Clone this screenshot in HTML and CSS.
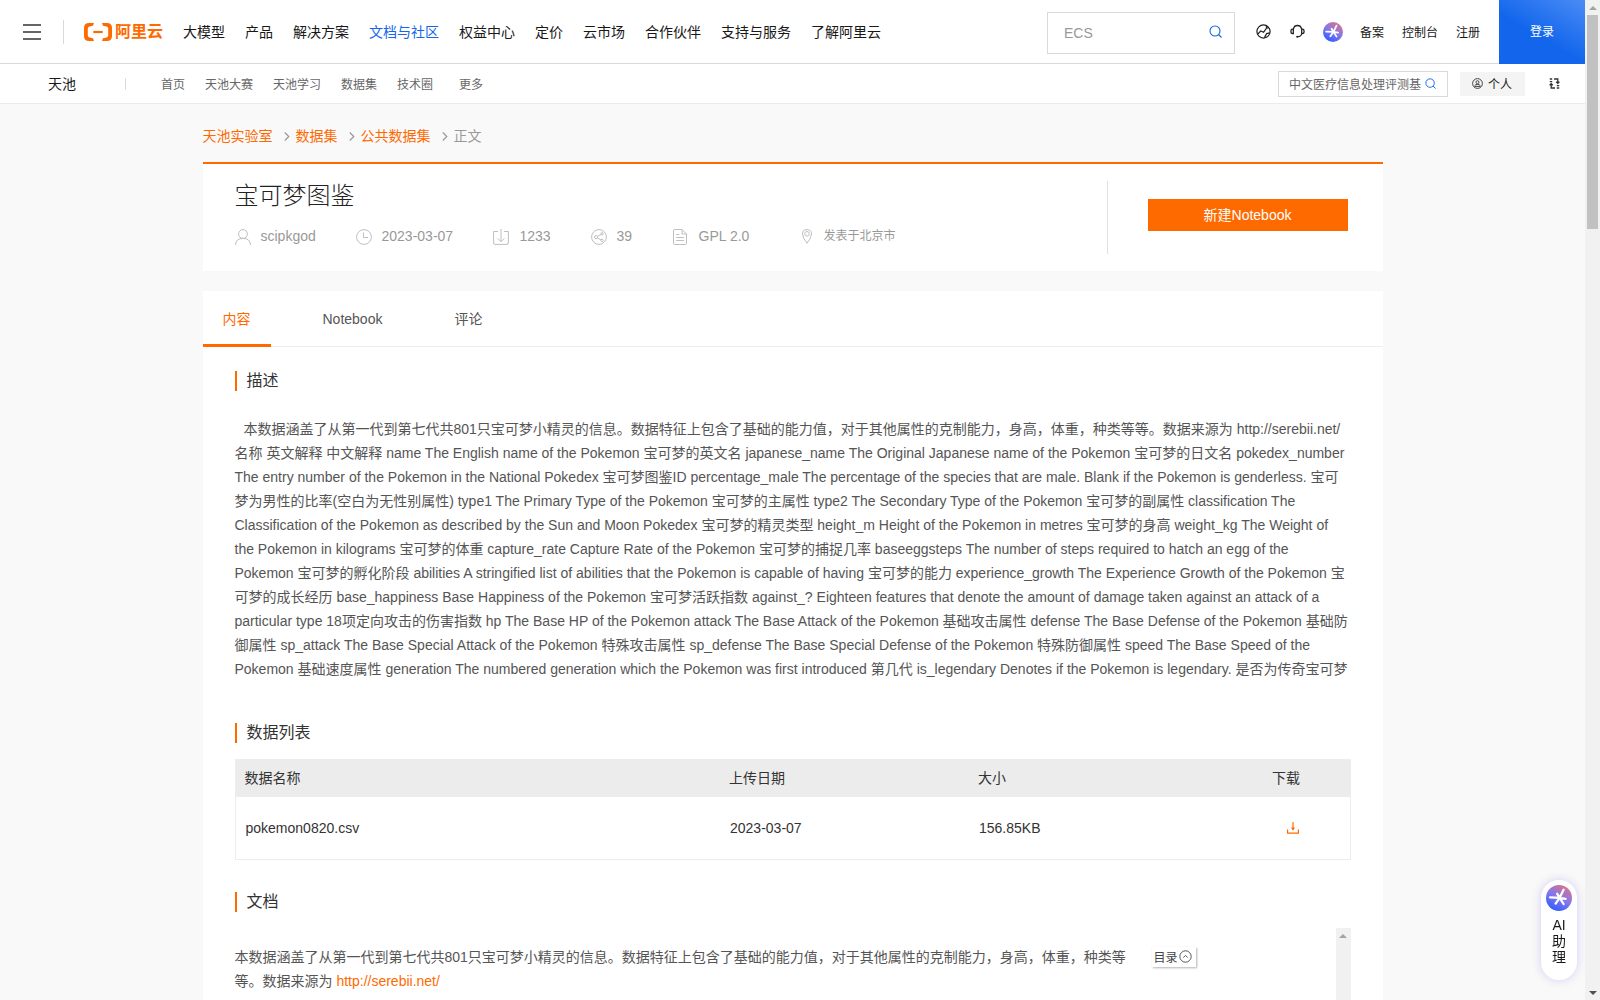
FILE: index.html
```html
<!DOCTYPE html>
<html lang="zh-CN">
<head>
  <meta charset="UTF-8">
  <meta name="viewport" content="width=device-width, initial-scale=1.0">
  <title>宝可梦图鉴_数据集-阿里云天池</title>
  <link rel="stylesheet" href="styles.css">
</head>
<body>
  <!-- 公共图形 -->
  <svg class="defs" width="0" height="0">
    <defs>
      <linearGradient id="aiGrad" x1="0.25" y1="1" x2="0.8" y2="0">
        <stop offset="0" stop-color="#2b5cff"/>
        <stop offset="0.5" stop-color="#8577ee"/>
        <stop offset="1" stop-color="#e0747e"/>
      </linearGradient>
      <symbol id="ai" viewBox="0 0 26 26">
        <circle cx="13" cy="13" r="13" fill="url(#aiGrad)"/>
        <path d="M17.6 4.8L13.6 12.8M4 12.4L13.6 12.8L19.6 13.8M13.6 12.8L9.6 18.6M13.6 12.8L17.6 19M13.6 12.8L11.2 8.8" fill="none" stroke="#fff" stroke-width="2.3" stroke-linecap="round"/>
      </symbol>
      <symbol id="search" viewBox="0 0 13 13">
        <circle cx="6" cy="6" r="5" fill="none" stroke="#1366ec" stroke-width="1.1"/>
        <path d="M9.5 9.5L12.5 12.5" stroke="#1366ec" stroke-width="1.1"/>
      </symbol>
    </defs>
  </svg>

  <div class="page">
    <!-- 顶部导航 -->
    <header class="header">
      <div class="burger"><i></i><i></i><i></i></div>
      <span class="header-line"></span>
      <a class="logo">
        <svg width="28" height="18" viewBox="0 0 28 18">
          <path d="M10 0H5Q0 0 0 5V13Q0 18 5 18H10L9 15.3L5.5 14.6Q3.8 14.2 3.8 12.5V5.5Q3.8 3.8 5.5 3.4L9 2.7Z" fill="#ff6a00"/>
          <path d="M18 0H23Q28 0 28 5V13Q28 18 23 18H18L19 15.3L22.5 14.6Q24.2 14.2 24.2 12.5V5.5Q24.2 3.8 22.5 3.4L19 2.7Z" fill="#ff6a00"/>
          <rect x="9.3" y="7.9" width="9.4" height="2.2" fill="#ff6a00"/>
        </svg>
        <span>阿里云</span>
      </a>
      <nav class="nav">
        <a>大模型</a>
        <a>产品</a>
        <a>解决方案</a>
        <a class="active">文档与社区</a>
        <a>权益中心</a>
        <a>定价</a>
        <a>云市场</a>
        <a>合作伙伴</a>
        <a>支持与服务</a>
        <a>了解阿里云</a>
      </nav>
      <div class="search-box">
        <span>ECS</span>
        <svg width="13" height="13"><use href="#search"/></svg>
      </div>
      <div class="tools">
        <svg width="15" height="15" viewBox="0 0 15 15" fill="none" stroke="#222" stroke-width="1.2">
          <circle cx="7.5" cy="7.5" r="6.6"/>
          <path d="M1.5 10.3L4.7 7L7.6 8.2L10.5 4.2L12.7 3.6M8.4 13.6L10.6 9.6L13.8 8.8M10.2 1.7L10.6 4"/>
        </svg>
        <svg width="15" height="15" viewBox="0 0 15 15" fill="none" stroke="#222" stroke-width="1.3">
          <path d="M3.3 5.2V9.5H2.2Q.9 9.3 .9 7.4Q.9 5.4 2.2 5.2H3.4C3.8 2.7 5.3 1.5 7.5 1.5S11.2 2.7 11.6 5.2H12.8Q14.1 5.4 14.1 7.4Q14.1 9.3 12.8 9.5H11.7V5.2M11.7 9.5Q11.3 12.6 7.6 12.8"/>
          <circle cx="7.2" cy="12.8" r="1" fill="#222" stroke="none"/>
        </svg>
        <svg width="20" height="20"><use href="#ai"/></svg>
      </div>
      <nav class="user-nav">
        <a>备案</a>
        <a>控制台</a>
        <a>注册</a>
      </nav>
      <a class="login">登录</a>
    </header>

    <!-- 二级导航 -->
    <div class="subnav">
      <span class="subnav-title">天池</span>
      <span class="subnav-line"></span>
      <nav class="subnav-menu">
        <a>首页</a>
        <a>天池大赛</a>
        <a>天池学习</a>
        <a>数据集</a>
        <a>技术圈</a>
        <a class="more">更多</a>
      </nav>
      <div class="sub-search">
        <span>中文医疗信息处理评测基</span>
        <svg width="11" height="11"><use href="#search"/></svg>
      </div>
      <a class="personal">
        <svg width="11" height="11" viewBox="0 0 11 11" fill="none" stroke="#444" stroke-width="1">
          <circle cx="5.5" cy="5.5" r="4.9"/>
          <circle cx="5.5" cy="4.2" r="1.5"/>
          <path d="M2.8 8.4V7.6Q3.3 6.4 5.5 6.4T8.2 7.6V8.4Z"/>
        </svg>
        个人
      </a>
      <svg class="switch" width="11" height="11" viewBox="0 0 11 11" fill="none" stroke="#333" stroke-width="1.3">
        <path d="M5 1H8.8V5M7.2 3.8L8.8 5.4L10.4 3.8M6 10H2.2V6M.6 7.2L2.2 5.6L3.8 7.2"/>
        <path d="M.8 1H3.2M.8 3.6H3.2M7.8 7.6H10.2M7.8 10H10.2"/>
      </svg>
    </div>

    <main class="main">
      <div class="breadcrumb">
        <a>天池实验室</a>
        <svg width="6" height="9" viewBox="0 0 6 9"><path d="M.8 .5L4.8 4.5L.8 8.5"/></svg>
        <a>数据集</a>
        <svg width="6" height="9" viewBox="0 0 6 9"><path d="M.8 .5L4.8 4.5L.8 8.5"/></svg>
        <a>公共数据集</a>
        <svg width="6" height="9" viewBox="0 0 6 9"><path d="M.8 .5L4.8 4.5L.8 8.5"/></svg>
        <span>正文</span>
      </div>

      <!-- 数据集信息 -->
      <section class="intro">
        <div class="intro-left">
          <h1>宝可梦图鉴</h1>
          <div class="meta">
            <span class="meta-item m-user">
              <svg width="16" height="16" viewBox="0 0 16 16"><circle cx="8" cy="5" r="4.4"/><path d="M.5 16Q.8 9.4 8 9.4T15.5 16"/></svg>
              scipkgod
            </span>
            <span class="meta-item m-date">
              <svg width="16" height="16" viewBox="0 0 16 16"><circle cx="8" cy="8" r="7.4"/><path d="M7.5 3.5V8.5H12"/></svg>
              2023-03-07
            </span>
            <span class="meta-item m-down">
              <svg width="16" height="16" viewBox="0 0 16 16"><path d="M5 2.5H.6V14Q.6 15.4 2 15.4H14Q15.4 15.4 15.4 14V2.5H11M8 0V12.6M4.6 9.4L8 12.8L11.4 9.4"/></svg>
              1233
            </span>
            <span class="meta-item m-share">
              <svg width="16" height="16" viewBox="0 0 16 16"><circle cx="8" cy="8" r="7.4"/><circle cx="5" cy="8.2" r="1.6"/><circle cx="11" cy="4.8" r="1.2"/><circle cx="11" cy="11.4" r="1.2"/><path d="M6.4 7.4L10 5.4M6.4 9L10 10.8"/></svg>
              39
            </span>
            <span class="meta-item m-lic">
              <svg width="14" height="16" viewBox="0 0 14 16"><path d="M9 .5H1.8Q.5 .5 .5 1.8V14.2Q.5 15.5 1.8 15.5H12.2Q13.5 15.5 13.5 14.2V5ZM9 .5V5H13.5M3.2 5.5H6M3.2 8.5H11M3.2 11.5H11"/></svg>
              GPL 2.0
            </span>
            <span class="meta-item m-loc">
              <svg width="10" height="15" viewBox="0 0 10 15"><path d="M5 14.2Q.5 8.6 .5 5Q.5 .6 5 .6T9.5 5Q9.5 8.6 5 14.2Z"/><circle cx="5" cy="4.8" r="2.3"/></svg>
              发表于北京市
            </span>
          </div>
        </div>
        <div class="intro-right">
          <button class="new-btn">新建Notebook</button>
        </div>
      </section>

      <section class="content">
        <!-- 标签页 -->
        <div class="tabs">
          <a class="tab active">内容</a>
          <a class="tab">Notebook</a>
          <a class="tab">评论</a>
        </div>

        <div class="panel">
          <h2>描述</h2>
          <p class="desc">
            <span class="indent">本数据涵盖了从第一代到第七代共801只宝可梦小精灵的信息。数据特征上包含了基础的能力值，对于其他属性的克制能力，身高，体重，种类等等。数据来源为 http://serebii.net/</span><br>
            名称 英文解释 中文解释 name The English name of the Pokemon 宝可梦的英文名 japanese_name The Original Japanese name of the Pokemon 宝可梦的日文名 pokedex_number<br>
            The entry number of the Pokemon in the National Pokedex 宝可梦图鉴ID percentage_male The percentage of the species that are male. Blank if the Pokemon is genderless. 宝可<br>
            梦为男性的比率(空白为无性别属性) type1 The Primary Type of the Pokemon 宝可梦的主属性 type2 The Secondary Type of the Pokemon 宝可梦的副属性 classification The<br>
            Classification of the Pokemon as described by the Sun and Moon Pokedex 宝可梦的精灵类型 height_m Height of the Pokemon in metres 宝可梦的身高 weight_kg The Weight of<br>
            the Pokemon in kilograms 宝可梦的体重 capture_rate Capture Rate of the Pokemon 宝可梦的捕捉几率 baseeggsteps The number of steps required to hatch an egg of the<br>
            Pokemon 宝可梦的孵化阶段 abilities A stringified list of abilities that the Pokemon is capable of having 宝可梦的能力 experience_growth The Experience Growth of the Pokemon 宝<br>
            可梦的成长经历 base_happiness Base Happiness of the Pokemon 宝可梦活跃指数 against_? Eighteen features that denote the amount of damage taken against an attack of a<br>
            particular type 18项定向攻击的伤害指数 hp The Base HP of the Pokemon attack The Base Attack of the Pokemon 基础攻击属性 defense The Base Defense of the Pokemon 基础防<br>
            御属性 sp_attack The Base Special Attack of the Pokemon 特殊攻击属性 sp_defense The Base Special Defense of the Pokemon 特殊防御属性 speed The Base Speed of the<br>
            Pokemon 基础速度属性 generation The numbered generation which the Pokemon was first introduced 第几代 is_legendary Denotes if the Pokemon is legendary. 是否为传奇宝可梦
          </p>

          <h2 class="list-title">数据列表</h2>
          <table class="data-table">
            <thead>
              <tr>
                <th class="c-name">数据名称</th>
                <th class="c-date">上传日期</th>
                <th class="c-size">大小</th>
                <th>下载</th>
              </tr>
            </thead>
            <tbody>
              <tr>
                <td>pokemon0820.csv</td>
                <td>2023-03-07</td>
                <td>156.85KB</td>
                <td class="c-down">
                  <svg width="12" height="12" viewBox="0 0 12 12" fill="none" stroke="#ff6a00" stroke-width="1.2"><path d="M.6 7.5V11.2H11.4V7.5M6 0V8"/><path d="M4 5.4H8L6 8.6Z" fill="#ff6a00" stroke="none"/></svg>
                </td>
              </tr>
            </tbody>
          </table>

          <h2 class="doc-title">文档</h2>
          <div class="doc">
            <p class="doc-text">
              本数据涵盖了从第一代到第七代共801只宝可梦小精灵的信息。数据特征上包含了基础的能力值，对于其他属性的克制能力，身高，体重，种类等<br>
              等。数据来源为 <a>http://serebii.net/</a>
            </p>
            <div class="toc">
              目录
              <svg width="13" height="13" viewBox="0 0 13 13" fill="none" stroke="#555"><circle cx="6.5" cy="6.5" r="5.7"/><path d="M4.3 7.6L6.5 5.4L8.7 7.6"/></svg>
            </div>
            <div class="doc-scroll"><i class="arrow-up"></i></div>
          </div>
        </div>
      </section>
    </main>
  </div>

  <!-- AI 助理 -->
  <div class="assistant">
    <svg width="26" height="26"><use href="#ai"/></svg>
    <span>AI</span>
    <span>助</span>
    <span>理</span>
  </div>

  <!-- 滚动条 -->
  <div class="scrollbar">
    <i class="arrow-up"></i>
    <div class="thumb"></div>
    <i class="arrow-down"></i>
  </div>
</body>
</html>
```

FILE: styles.css
```css
* {
  box-sizing: border-box;
}

body {
  margin: 0;
  height: 1000px;
  overflow: hidden;
  background: #f9f9f9;
  font-family: "Liberation Sans", "Noto Sans CJK SC", sans-serif;
  font-size: 14px;
  color: #181818;
}

svg {
  display: block;
  flex: none;
}

.defs {
  position: absolute;
}

.page {
  width: 1585px;
}

/* 顶部导航 */
.header {
  display: flex;
  align-items: center;
  height: 64px;
  padding-left: 23px;
  background: #fff;
  border-bottom: 1px solid #d9d9d9;
  white-space: nowrap;
}

.burger {
  display: flex;
  flex-direction: column;
  gap: 5px;
  width: 18px;
}

.burger i {
  height: 2px;
  background: #666;
}

.header-line {
  width: 1px;
  height: 24px;
  margin: 0 20px 0 22px;
  background: #d9d9d9;
}

.logo {
  display: flex;
  align-items: center;
  gap: 3px;
  width: 99px;
  color: #ff6a00;
  font-size: 16px;
  font-weight: bold;
  line-height: 20px;
}

.nav {
  display: flex;
  gap: 20px;
  line-height: 20px;
}

.nav .active {
  color: #1366ec;
}

.search-box {
  display: flex;
  align-items: center;
  justify-content: space-between;
  width: 188px;
  height: 42px;
  margin: 2px 21px 0 auto;
  padding: 0 12px 0 16px;
  border: 1px solid #d9d9d9;
  color: #999;
}

.search-box svg {
  margin-top: -2px;
}

.tools {
  display: flex;
  align-items: center;
  gap: 19px;
  margin-right: 17px;
}

.tools svg:last-child {
  margin-left: -1px;
}

.user-nav {
  display: flex;
  gap: 18px;
  margin-right: 19px;
  font-size: 12px;
}

.login {
  width: 86px;
  height: 64px;
  margin-bottom: -1px;
  background: linear-gradient(30deg, #1366ec 45%, #4a8cf5);
  color: #fff;
  font-size: 12px;
  line-height: 65px;
  text-align: center;
}

/* 二级导航 */
.subnav {
  display: flex;
  align-items: center;
  height: 40px;
  padding-left: 48px;
  padding-right: 25px;
  background: #fff;
  border-bottom: 1px solid #ebebeb;
  font-size: 12px;
  white-space: nowrap;
}

.subnav-title {
  width: 77px;
  padding-bottom: 2px;
  font-size: 14px;
}

.subnav-line {
  width: 1px;
  height: 12px;
  margin-right: 35px;
  background: #d9d9d9;
}

.subnav-menu {
  display: flex;
  gap: 20px;
  color: #666;
}

.subnav-menu .more {
  margin-left: 6px;
}

.sub-search {
  display: flex;
  align-items: center;
  justify-content: space-between;
  width: 170px;
  height: 26px;
  margin-left: auto;
  padding: 0 11px 0 10px;
  border: 1px solid #d9d9d9;
  color: #666;
}

.personal {
  display: flex;
  align-items: center;
  gap: 5px;
  width: 65px;
  height: 24px;
  margin: 0 24px 0 12px;
  padding-left: 12px;
  background: #f4f4f4;
}

/* 面包屑 */
.main {
  width: 1180px;
  margin: 0 auto;
}

.breadcrumb {
  display: flex;
  align-items: center;
  height: 58px;
  padding-top: 4px;
  color: #999;
}

.breadcrumb a {
  color: #ff6a00;
}

.breadcrumb svg {
  margin: 2px 6px 0 11px;
  fill: none;
  stroke: #999;
  stroke-width: 1.2;
}

/* 数据集信息 */
.intro {
  display: flex;
  height: 109px;
  background: #fff;
  border-top: 2px solid #ff6a00;
}

.intro-left {
  flex: 1;
  padding: 14px 0 0 32px;
}

h1 {
  margin: 0;
  font-size: 24px;
  font-weight: 300;
  line-height: 36px;
  color: #222;
}

.meta {
  display: flex;
  align-items: center;
  margin-top: 9px;
  line-height: 24px;
  color: #999;
  white-space: nowrap;
}

.meta-item {
  display: flex;
  align-items: center;
  gap: 10px;
}

.meta-item svg {
  margin-top: 1px;
  fill: none;
  stroke: #bfbfbf;
}

.m-user { width: 121px; }
.m-date { width: 137px; }
.m-down { gap: 11px; width: 98px; }
.m-share { width: 82px; }
.m-lic { gap: 12px; width: 129px; }
.m-loc { gap: 12px; font-size: 12px; line-height: 26px; }

.intro-right {
  width: 276px;
  height: 73px;
  margin-top: 17px;
  padding: 18px 0 0 40px;
  border-left: 1px solid #e0e0e0;
}

.new-btn {
  display: block;
  width: 200px;
  height: 32px;
  padding: 0;
  border: none;
  background: #ff6a00;
  color: #fff;
  font-family: inherit;
  font-size: 14px;
  line-height: 32px;
}

/* 内容 */
.content {
  height: 720px;
  margin-top: 20px;
  background: #fff;
}

.tabs {
  display: flex;
  gap: 32px;
  height: 56px;
  border-bottom: 1px solid #ededed;
  color: #555;
  line-height: 57px;
}

.tab {
  height: 56px;
  padding: 0 20px;
}

.tab.active {
  width: 68px;
  border-bottom: 3px solid #ff6a00;
  color: #ff6a00;
}

.panel {
  padding: 24px 32px 0;
}

h2 {
  margin: 0;
  height: 20px;
  padding-left: 10px;
  border-left: 2px solid #ff6a00;
  font-size: 16px;
  font-weight: normal;
  line-height: 20px;
  color: #333;
}

.desc {
  margin: 26px 0 0;
  line-height: 24px;
  color: #555;
  white-space: nowrap;
}

.indent {
  padding-left: 9px;
}

.list-title {
  margin-top: 42px;
}

.data-table {
  width: 1116px;
  height: 101px;
  margin-top: 16px;
  border-collapse: collapse;
  table-layout: fixed;
  border: 1px solid #ededed;
  color: #333;
}

.data-table th {
  height: 37px;
  padding: 0 9px 3px;
  background: #ececec;
  font-weight: normal;
  text-align: left;
}

.data-table td {
  padding: 0 10px;
}

.c-name { width: 485px; }
.c-date { width: 249px; }
.c-size { width: 294px; }

.data-table .c-down {
  padding-left: 24px;
}

.doc-title {
  margin-top: 32px;
}

.doc {
  display: flex;
  height: 72px;
  margin-top: 16px;
}

.doc-text {
  width: 917px;
  margin: 0;
  padding-top: 17px;
  line-height: 24px;
  color: #555;
  white-space: nowrap;
}

.doc-text a {
  color: #ff6a00;
}

.toc {
  display: flex;
  align-items: center;
  gap: 1px;
  width: 44px;
  height: 20px;
  margin-top: 19px;
  padding: 0 0 2px 2px;
  background: #fff;
  box-shadow: 1px 1px 2px rgba(0, 0, 0, 0.3);
  color: #444;
  font-size: 12px;
}

.doc-scroll {
  width: 15px;
  height: 72px;
  margin-left: auto;
  padding-top: 6px;
  background: #f1f1f1;
}

/* 悬浮助理 */
.assistant {
  position: fixed;
  left: 1541px;
  top: 880px;
  display: flex;
  flex-direction: column;
  align-items: center;
  width: 36px;
  height: 100px;
  padding-top: 5px;
  border-radius: 18px;
  background: #fff;
  box-shadow: 0 0 10px rgba(120, 110, 230, 0.3);
  line-height: 16px;
}

.assistant svg {
  margin-bottom: 6px;
}

/* 滚动条 */
.scrollbar {
  position: fixed;
  right: 0;
  top: 0;
  display: flex;
  flex-direction: column;
  width: 15px;
  height: 1000px;
  padding: 6px 0 5px;
  background: #f1f1f1;
}

.thumb {
  width: 11px;
  height: 214px;
  margin: 5px 2px 0;
  background: #c1c1c1;
}

.arrow-up,
.arrow-down {
  display: block;
  width: 0;
  margin: 0 auto;
  border: 4px solid transparent;
}

.arrow-up {
  border-top: none;
  border-bottom-color: #a3a3a3;
}

.arrow-down {
  margin-top: auto;
  border-bottom: none;
  border-top-color: #505050;
}
```
